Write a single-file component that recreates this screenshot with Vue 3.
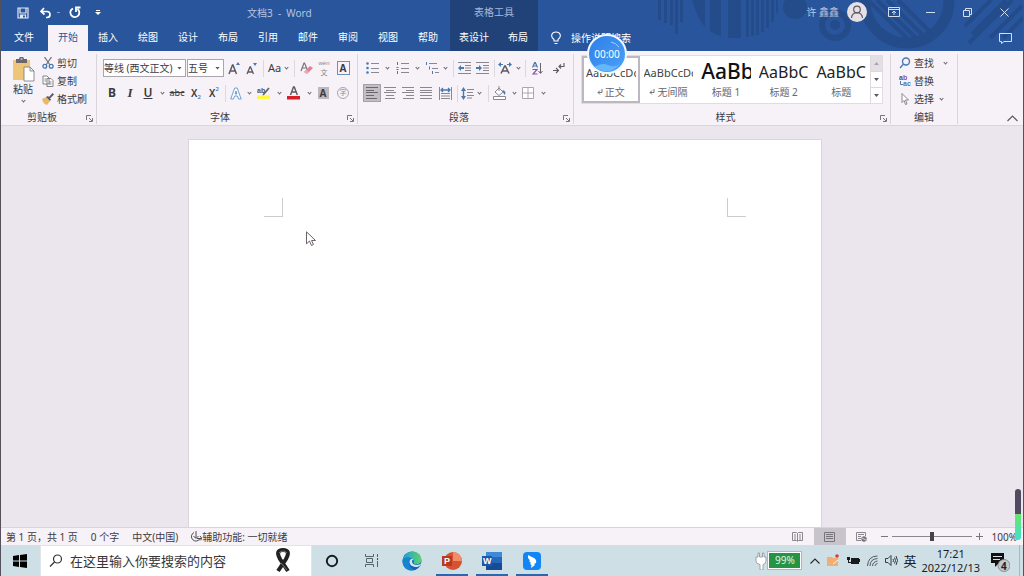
<script setup>
import { ref } from 'vue'

const tabs = ['文件', '开始', '插入', '绘图', '设计', '布局', '引用', '邮件', '审阅', '视图', '帮助']
const activeTab = ref('开始')
const styles = [
  { sample: 'AaBbCcDc', name: '正文', kind: 'body', mark: true },
  { sample: 'AaBbCcDc', name: '无间隔', kind: 'body', mark: true },
  { sample: 'AaBb', name: '标题 1', kind: 'h1' },
  { sample: 'AaBbC', name: '标题 2', kind: 'h2' },
  { sample: 'AaBbC', name: '标题', kind: 'h2' }
]
const activeStyle = ref('正文')
const query = ref('')
const zoom = ref(100)
</script>

<template>
  <div class="desktop">
    <header class="head">
      <svg class="deco" width="384" height="51" viewBox="640 0 384 51" aria-hidden="true">
        <g fill="#244c8a">
          <path d="M658 0h3v20h-3zM664 0h3v23h-3zM670 0h3v25h-3zM675 0h3v34h-3zM680 0h3v22h-3zM692 0h13v27q-8-9-13-27zM710 0h11v36q-6-1-11-5zM728 0h13v38h-13zM746 0h3v37h-3zM751 0h3v36h-3zM756 0h3v35h-3zM761 0h3v32h-3zM766 0h3v28h-3zM771 0h3v22h-3zM776 0h2v13h-2z" />
          <circle cx="795" cy="7" r="12" />
          <circle cx="835" cy="25" r="5" />
        </g>
        <g fill="none" stroke="#244c8a">
          <circle cx="835" cy="25" r="13" stroke-width="6" />
          <circle cx="907" cy="1" r="42" stroke-width="11" />
          <path stroke-width="4" d="M868 0l46 45M877 0l42 41M887 0l40 39M898 0l34 34" />
          <path stroke-width="4" d="M965 26l26-26M972 34l34-34M969 43l43-43M990 38l32-32M1003 38l20-20" />
        </g>
      </svg>

      <div class="head-main">
        <div class="quick">
          <button aria-label="保存"><svg width="12" height="12" viewBox="0 0 12 12"><path fill="none" stroke="#e4eaf5" stroke-width="1.200" d="M1 1h10v10H1zM3 1v5h6V1M3.500 11V8h5v3" /><path fill="#e4eaf5" d="M4 8h2v3H4z" /></svg></button>
          <button aria-label="撤消"><svg width="14" height="12" viewBox="0 0 14 12"><path fill="none" stroke="#fff" stroke-width="1.700" d="M5 1L2 4.500L5.500 7.500M2 4.500h6c4 0 4 6 0 6H7" /></svg></button>
          <i class="dash"></i>
          <button aria-label="重复"><svg width="14" height="13" viewBox="0 0 14 13"><path fill="none" stroke="#fff" stroke-width="1.800" d="M5 2.500A4.500 4.500 0 1 0 9.500 3M8 6V1.500h4.500" /></svg></button>
          <button class="more" aria-label="自定义"><svg width="6" height="6" viewBox="0 0 6 6"><path fill="#fff" d="M1 0h4v1H1zM0 2h6L3 5z" /></svg></button>
          <span class="doc-title">文档3&nbsp; -&nbsp; Word</span>
        </div>
        <nav class="tabs">
          <button v-for="t in tabs" :key="t" :class="{ active: t === activeTab }" @click="activeTab = t">{{ t }}</button>
        </nav>
      </div>

      <div class="context">
        <span class="context-name">表格工具</span>
        <nav class="tabs"><button class="wide">表设计</button><button>布局</button></nav>
      </div>

      <div class="head-side">
        <div class="account">
          <span class="user">许 鑫鑫</span>
          <svg class="avatar" width="20" height="20" viewBox="0 0 20 20"><circle cx="10" cy="10" r="10" fill="#e5e1e6" /><g fill="none" stroke="#5b575f" stroke-width="1.200"><circle cx="10" cy="7.500" r="3.300" /><path d="M4.500 16c.5-7 10.500-7 11 0" /></g></svg>
          <button aria-label="功能区显示选项"><svg width="12" height="10" viewBox="0 0 12 10"><path fill="none" stroke="#d5deee" d="M.5.500h11v9H.5zM.5 2.500h11M6 8V4M4 6l2-2 2 2" /></svg></button>
          <button aria-label="最小化"><svg width="9" height="9" viewBox="0 0 9 9"><path stroke="#d5deee" d="M0 4.500h9" /></svg></button>
          <button aria-label="还原"><svg width="9" height="9" viewBox="0 0 9 9"><path fill="none" stroke="#d5deee" d="M.5 2.500h6v6h-6zM2.500 2.500v-2h6v6h-2" /></svg></button>
          <button aria-label="关闭"><svg width="9" height="9" viewBox="0 0 9 9"><path stroke="#d5deee" d="M.5.500l8 8M8.500.500l-8 8" /></svg></button>
        </div>
        <div class="tell">
          <svg width="10" height="14" viewBox="0 0 10 14"><path fill="none" stroke="#fff" stroke-width="1.100" d="M3 10V8.500C-1 5.500.5 1 5 1s6 4.500 2 7.500V10zM3.500 12.500h3" /></svg>
          <a href="#">操作说明搜索</a>
          <button class="comment" aria-label="批注"><svg width="13" height="11" viewBox="0 0 13 11"><path fill="none" stroke="#d5deee" d="M.5.500h12v8H5L2.500 10.500V8.500h-2z" /></svg></button>
        </div>
      </div>
      <div class="timer">
        <svg width="36" height="36" viewBox="0 0 36 36" aria-hidden="true"><path fill="none" stroke="#9ad4ff" d="M22 6q5 1 8 5" /><path fill="#66b6fb" d="M5 31q8-5 14-2t12-1Q20 41 5 31z" /></svg>
        <span>00:00</span>
      </div>
    </header>

    <section class="ribbon">
      <div class="group clipboard">
        <div class="clip-body">
          <button class="paste">
            <svg width="23" height="25" viewBox="0 0 23 25"><path fill="#edc67a" d="M1 3h17v20H1z" /><path fill="#69666e" d="M4 2h3c0-3 5-3 5 0h3v4H4z" /><path fill="#f6f2f7" d="M8.500 1.500h2v1h-2z" /><path fill="#fff" stroke="#77737c" stroke-width=".8" d="M12 10h6l4 4v10H12zM18 10v4h4" /></svg>
            <span>粘贴</span><i class="chev"></i>
          </button>
          <div class="stack">
            <button><svg width="12" height="12" viewBox="0 0 12 12"><g fill="none" stroke="#77747c" stroke-width="1.300"><path d="M2.500 0L8 8M9.500 0L4 8" /><g stroke="#4879b3"><circle cx="2.800" cy="9.300" r="1.900" /><circle cx="9.200" cy="9.300" r="1.900" /></g></g></svg>剪切</button>
            <button><svg width="12" height="12" viewBox="0 0 12 12"><path fill="#fff" stroke="#77747c" stroke-width=".9" d="M1 1h4l2 2v6H1zM5 3.500h4l2 2v6H5zM2.500 4h2M2.500 6h2M7 7h2.500M7 9h2.500" /></svg>复制</button>
            <button><svg width="12" height="12" viewBox="0 0 12 12"><path fill="#e6b96c" d="M0 6l4-2 4 4-3 4q-4-1-5-6z" /><path fill="#5d5962" d="M4 4l2-1 1 1 3.500-4L12 1.500 8 5.500l1 1L8 8z" /></svg>格式刷</button>
          </div>
        </div>
        <footer><span>剪贴板</span><button class="launch" aria-label="剪贴板设置"><svg width="7" height="7" viewBox="0 0 7 7"><path fill="none" stroke="#77747c" d="M.5 5V.5H5M3 3l3 3M6.500 3v3.500H3" /></svg></button></footer>
      </div>

      <div class="group font">
        <div class="rows">
          <div class="font-one">
            <label class="combo"><select aria-label="字体"><option>等线 (西文正文)</option></select><i class="tri"></i></label>
            <label class="combo"><select aria-label="字号"><option>五号</option></select><i class="tri"></i></label>
            <button aria-label="增大字号"><svg width="13" height="13" viewBox="0 0 13 13"><path fill="none" stroke="#5d5962" stroke-width="1.500" d="M1 12L4.500 3h.5L8.500 12M2.500 9h5" /><path fill="#4879b3" d="M8 3l2-3 2 3z" /></svg></button>
            <button aria-label="减小字号"><svg width="12" height="13" viewBox="0 0 12 13"><path fill="none" stroke="#5d5962" stroke-width="1.300" d="M1 12L4 5h.5L7.500 12M2 10h4.500" /><path fill="#4879b3" d="M7 1h4L9 4z" /></svg></button>
            <i class="bar"></i>
            <button class="aa">Aa<i class="chev"></i></button>
            <i class="bar"></i>
            <button aria-label="清除格式"><svg width="13" height="13" viewBox="0 0 13 13"><path fill="none" stroke="#77747c" stroke-width="1.200" d="M1 9L4 1h.5L7.500 8M2 6h4" /><path fill="#df8197" d="M4 10l6-6 3 2-6 6z" /><path fill="#efabba" d="M4 10l2-2 3 2-2 2z" /></svg></button>
            <button class="pinyin"><span>wén</span><span>文</span></button>
            <button class="boxed">A</button>
          </div>
          <div class="font-two">
            <button class="b">B</button><button class="i">I</button><button class="u">U</button><button aria-label="下划线选项"><i class="chev"></i></button>
            <button class="strike">abc</button><button class="sub">X<sub>2</sub></button><button class="sub">X<sup>2</sup></button>
            <i class="bar"></i>
            <button aria-label="文本效果"><svg width="12" height="13" viewBox="0 0 12 13"><path fill="#fff" stroke="#6f9fd3" stroke-width="1" d="M.7 12L4.700 1h2.500l4 11H8.500L7.500 9h-3l-1 3zM5 7h2L6 4z" /></svg></button><button aria-label="文本效果选项"><i class="chev"></i></button>
            <button aria-label="突出显示"><svg width="14" height="14" viewBox="0 0 14 14"><path fill="#fff843" d="M0 9.500h13V13H0z" /><text x="0" y="7" class="tiny">ab</text><path stroke="#68645f" stroke-width="1.800" d="M6 9l6-7" /></svg></button><button aria-label="突出显示选项"><i class="chev"></i></button>
            <button aria-label="字体颜色"><svg width="14" height="14" viewBox="0 0 14 14"><path fill="none" stroke="#5d5962" stroke-width="1.400" d="M3.500 9l3-8h.8l3 8M4.500 6h5" /><path fill="#d61f26" d="M0 10h13v3.500H0z" /></svg></button><button aria-label="字体颜色选项"><i class="chev"></i></button>
            <button class="shade">A</button>
            <button class="circled">字</button>
          </div>
        </div>
        <footer><span>字体</span><button class="launch" aria-label="字体设置"><svg width="7" height="7" viewBox="0 0 7 7"><path fill="none" stroke="#77747c" d="M.5 5V.5H5M3 3l3 3M6.500 3v3.500H3" /></svg></button></footer>
      </div>

      <div class="group para">
        <div class="rows">
          <div class="para-one">
            <button aria-label="项目符号"><svg width="13" height="12" viewBox="0 0 13 12"><g fill="#4879b3"><circle cx="1.500" cy="1.500" r="1.300" /><circle cx="1.500" cy="6" r="1.300" /><circle cx="1.500" cy="10.500" r="1.300" /></g><path stroke="#8b8790" d="M5 1.500h8M5 6.500h8M5 10.500h8" /></svg></button><button aria-label="项目符号选项"><i class="chev"></i></button>
            <button aria-label="编号"><svg width="13" height="12" viewBox="0 0 13 12"><path stroke="#4879b3" d="M1.500 0v3M.5 5.500h2M.5 7.500h2M1.500 9v3" /><path stroke="#8b8790" d="M5 1.500h8M5 6.500h8M5 10.500h8" /></svg></button><button aria-label="编号选项"><i class="chev"></i></button>
            <button aria-label="多级列表"><svg width="13" height="12" viewBox="0 0 13 12"><path stroke="#4879b3" d="M.5 0v3M3.500 4.500v3M6.500 9v3" /><path stroke="#8b8790" d="M3 1.500h8M6 6.500h6M9 10.500h4" /></svg></button><button aria-label="多级列表选项"><i class="chev"></i></button>
            <i class="bar"></i>
            <button aria-label="减少缩进"><svg width="13" height="12" viewBox="0 0 13 12"><path stroke="#8b8790" d="M0 .5h13M7 3.500h6M7 6h6M7 8.500h6M0 11.500h13" /><path fill="#4879b3" d="M0 6l3-3v2h3v2H3v2z" /></svg></button>
            <button aria-label="增加缩进"><svg width="13" height="12" viewBox="0 0 13 12"><path stroke="#8b8790" d="M0 .5h13M7 3.500h6M7 6h6M7 8.500h6M0 11.500h13" /><path fill="#4879b3" d="M6 6L3 3v2H0v2h3v2z" /></svg></button>
            <i class="bar"></i>
            <button aria-label="中文版式"><svg width="14" height="12" viewBox="0 0 14 12"><path fill="none" stroke="#5d5962" stroke-width="1.500" d="M3 11.500L6.700 4h.6L11 11.500M4.500 9h5" /><path fill="#4879b3" d="M0 2.500L3 0v2h2v1H3v2zM14 2.500L11 0v2H9v1h2v2z" /></svg></button><button aria-label="中文版式选项"><i class="chev"></i></button>
            <i class="bar"></i>
            <button aria-label="排序"><svg width="11" height="13" viewBox="0 0 11 13"><path fill="none" stroke="#4879b3" stroke-width="1.200" d="M.5 5.500L2.700.5h.6l2.200 5M1.500 4h3" /><path fill="none" stroke="#8d52a5" stroke-width="1.200" d="M.5 7.500H5l-4 4.500h4.500" /><path fill="none" stroke="#69666e" d="M8.500 1v10M6.500 9l2 2.500 2-2.500" /></svg></button>
            <i></i>
            <button aria-label="显示编辑标记"><svg width="12" height="12" viewBox="0 0 12 12"><path fill="none" stroke="#5d5962" stroke-width="1.100" d="M11 1v3.500H6M8 2.500l-2 2 2 2M0 8.500h5M3 6l2.500 2.500L3 11" /></svg></button>
          </div>
          <div class="para-two">
            <button class="on" aria-label="左对齐"><svg width="12" height="12" viewBox="0 0 12 12"><path stroke="#69666e" d="M0 .5h12M0 3.500h8M0 5.500h12M0 8.500h8M0 11.500h11" /></svg></button>
            <button aria-label="居中"><svg width="12" height="12" viewBox="0 0 12 12"><path stroke="#8b8790" d="M0 .5h12M2 3.500h8M0 5.500h12M2 8.500h8M1 11.500h10" /></svg></button>
            <button aria-label="右对齐"><svg width="12" height="12" viewBox="0 0 12 12"><path stroke="#8b8790" d="M0 .5h12M4 3.500h8M0 5.500h12M4 8.500h8M1 11.500h11" /></svg></button>
            <button aria-label="两端对齐"><svg width="12" height="12" viewBox="0 0 12 12"><path stroke="#8b8790" d="M0 .5h12M0 3.500h12M0 5.500h12M0 8.500h12M0 11.500h12" /></svg></button>
            <button aria-label="分散对齐"><svg width="13" height="13" viewBox="0 0 13 13"><path stroke="#8b8790" d="M.5 0v13M12.500 0v13M2 6.500h9M2 9h9M2 11.500h9" /><path fill="none" stroke="#4879b3" stroke-width="1.300" d="M2 3h9M4 1L2 3l2 2M9 1l2 2-2 2" /></svg></button>
            <i class="bar"></i>
            <button aria-label="行距"><svg width="13" height="13" viewBox="0 0 13 13"><path fill="#4879b3" d="M0 4l2.500-4L5 4H3.200v5H5l-2.500 4L0 9h1.800V4z" /><path stroke="#8b8790" d="M6 2.500h7M6 5.500h6M6 8.500h7M6 11h5" /></svg></button><button aria-label="行距选项"><i class="chev"></i></button>
            <i class="bar"></i>
            <button aria-label="底纹"><svg width="14" height="14" viewBox="0 0 14 14"><path fill="#fff" stroke="#8b8790" d="M.5 10.500h12v3H.5zM2 6l4-4 4 4-4 3.500zM6 5V0" /><path fill="#4879b3" d="M10 4q4 2 1.500 5L9.500 5z" /></svg></button><button aria-label="底纹选项"><i class="chev"></i></button>
            <button aria-label="边框"><svg width="12" height="12" viewBox="0 0 12 12"><path fill="#fff" stroke="#aaa6af" d="M.5.500h11v11H.5zM6 0v12M0 6h12" /></svg></button><button aria-label="边框选项"><i class="chev"></i></button>
          </div>
        </div>
        <footer><span>段落</span><button class="launch" aria-label="段落设置"><svg width="7" height="7" viewBox="0 0 7 7"><path fill="none" stroke="#77747c" d="M.5 5V.5H5M3 3l3 3M6.500 3v3.500H3" /></svg></button></footer>
      </div>

      <div class="group gallery-group">
        <div class="gallery">
          <button v-for="s in styles" :key="s.name" class="style" :class="{ chosen: s.name === activeStyle }" @click="activeStyle = s.name">
            <span class="sample" :class="s.kind">{{ s.sample }}</span>
            <span class="style-name"><svg v-if="s.mark" width="6" height="6" viewBox="0 0 6 6"><path fill="none" stroke="#77747c" d="M5 0v3.500H1M3 1.500l-2 2 2 2" /></svg>{{ s.name }}</span>
          </button>
          <div class="scroll"><button class="off" aria-label="上一行"><i class="tri up"></i></button><button aria-label="下一行"><i class="tri"></i></button><button aria-label="其他"><i class="tri"></i></button></div>
        </div>
        <footer><span>样式</span><button class="launch" aria-label="样式设置"><svg width="7" height="7" viewBox="0 0 7 7"><path fill="none" stroke="#77747c" d="M.5 5V.5H5M3 3l3 3M6.500 3v3.500H3" /></svg></button></footer>
      </div>

      <div class="group editing">
        <div class="stack">
          <button><svg width="12" height="12" viewBox="0 0 12 12"><g fill="none" stroke="#4879b3" stroke-width="1.400"><circle cx="7" cy="4.500" r="3.500" /><path d="M4.500 7L1 11" /></g></svg>查找<i class="chev far"></i></button>
          <button><svg width="12" height="12" viewBox="0 0 12 12"><text x="0" y="5" class="tiny">a</text><text x="4" y="5" class="tiny purple">b</text><text x="4" y="11" class="tiny blue">ac</text><path fill="none" stroke="#4879b3" d="M1.500 6v3.500H4" /></svg>替换</button>
          <button><svg width="12" height="12" viewBox="0 0 12 12"><path fill="#fff" stroke="#8b8790" d="M3 .5v9l2-2 1.500 4 1.500-.5L6.500 7H9.500z" /></svg>选择<i class="chev"></i></button>
        </div>
        <footer><span>编辑</span></footer>
      </div>
      <button class="collapse" aria-label="折叠功能区"><svg width="11" height="7" viewBox="0 0 11 7"><path fill="none" stroke="#5d5962" stroke-width="1.200" d="M.5 6l5-5 5 5" /></svg></button>
    </section>

    <main class="workspace">
      <article class="page">
        <i class="mark left"></i><i class="mark right"></i>
      </article>
      <svg class="cursor" width="11" height="15" viewBox="0 0 11 15"><path fill="#fff" stroke="#6b626c" d="M.5.800v12l3-2.800 2 4.500 2-1-2-4h4z" /></svg>
    </main>

    <div class="status">
      <span>第 1 页，共 1 页</span><span class="words">0 个字</span><span class="lang">中文(中国)</span>
      <span class="access"><svg width="12" height="12" viewBox="0 0 12 12"><path fill="none" stroke="#4e4b52" d="M4 1.500a4.500 4.500 0 1 0 6 6M6 0v7M3.500 5L6 7.500 8.500 5M7 7.500h5M10 5l2 2.500-2 2" /></svg>辅助功能: 一切就绪</span>
      <div class="views">
        <button aria-label="阅读视图"><svg width="11" height="10" viewBox="0 0 11 10"><path fill="none" stroke="#8b8790" d="M.5.500h4l1 1 1-1h4v8h-4l-1 1-1-1h-4zM5.500 1v8M2 3h2M2 5h2M2 7h2M7 3h2M7 5h2M7 7h2" /></svg></button>
        <button class="on" aria-label="页面视图"><svg width="11" height="10" viewBox="0 0 11 10"><path fill="none" stroke="#77747c" d="M.5.500h10v9H.5zM2 2.500h7M2 4.500h7M2 6.500h7" /></svg></button>
        <button aria-label="Web 版式视图"><svg width="11" height="10" viewBox="0 0 11 10"><path fill="none" stroke="#8b8790" d="M5 8.500H.5v-8h9V4M2 2.500h6M2 4.500h3M2 6.500h3" /><circle cx="8" cy="7" r="2.700" fill="#77747c" /><path stroke="#fff" stroke-width=".7" d="M6 6l4 2" /></svg></button>
      </div>
      <div class="zoom"><button aria-label="缩小"><svg width="7" height="7" viewBox="0 0 7 7"><path stroke="#77747c" d="M0 3.500h7" /></svg></button><input v-model="zoom" type="range" min="10" max="190" aria-label="缩放"><button aria-label="放大"><svg width="7" height="7" viewBox="0 0 7 7"><path stroke="#77747c" d="M0 3.500h7M3.500 0v7" /></svg></button><span>{{ zoom }}%</span></div>
    </div>

    <footer class="taskbar">
      <button class="start" aria-label="开始"><svg width="14" height="14" viewBox="0 0 14 14"><path d="M0 2l6-1v5.500H0zM7 1l7-1v6.500H7zM0 7.500h6V13l-6-1zM7 7.500h7V14l-7-1z" /></svg></button>
      <label class="search">
        <svg width="14" height="14" viewBox="0 0 14 14"><g fill="none" stroke="#333" stroke-width="1.200"><circle cx="8.500" cy="5" r="4" /><path d="M5.500 8L1 12.500" /></g></svg>
        <input v-model="query" type="text" placeholder="在这里输入你要搜索的内容" aria-label="搜索">
        <svg width="16" height="26" viewBox="0 0 16 26"><path fill="none" stroke="#222" stroke-width="4" d="M3 23L11 11Q16 2 8 2T5 11l8 12" /><path fill="none" stroke="#77747c" stroke-width="1" d="M4 5q4-4 8 0M6 15l6 7" /></svg>
      </label>
      <nav class="apps">
        <button aria-label="Cortana"><svg width="14" height="14" viewBox="0 0 14 14"><circle cx="7" cy="7" r="5.200" fill="none" stroke="#151a1d" stroke-width="1.900" /></svg></button>
        <button aria-label="任务视图"><svg width="14" height="13" viewBox="0 0 14 13"><path fill="none" stroke="#56636a" d="M.5 0v2.500h8V0M1.500 4.500h6v4h-6zM.5 13v-2.500h8V13M12.500 0v3M12.500 7v6" /><path fill="#3d474c" d="M12 4h1v2h-1z" /></svg></button>
        <button aria-label="Edge"><svg width="20" height="20" viewBox="0 0 20 20"><defs><linearGradient id="edge-top"><stop stop-color="#1e9ddd" /><stop offset="1" stop-color="#5fd365" /></linearGradient></defs><circle cx="10" cy="10" r="9.500" fill="#0f66b8" /><path fill="url(#edge-top)" d="M.6 9C2-1.500 17-3 19.500 8c.5 4-3 6-7 5-2-1 0-2-1-4C9 6 3 6 .6 9z" /><path fill="#1585cf" d="M.5 9C3 5 9 6 10 8c-5 2-3 9 2 11C4 21 0 15 .5 9z" /><path fill="#d3e3e9" d="M11.500 8c-3 2-1 6 3 6 2 0 4-1 5-2-.5 2-2 3-4 4-5 0-8-2-8-5 0-2 2-4 4-3z" /></svg></button>
        <button class="running" aria-label="PowerPoint"><svg width="20" height="18" viewBox="0 0 20 18"><circle cx="11" cy="9" r="9" fill="#d65332" /><path fill="#f08e69" d="M11 0a9 9 0 0 1 9 9h-9z" /><path fill="#b73b1e" d="M0 4h10v10H0z" /><text x="2" y="12" class="logo">P</text></svg></button>
        <button class="running" aria-label="Word"><svg width="20" height="18" viewBox="0 0 20 18"><path fill="#3d8bd8" d="M4 0h16v6H4z" /><path fill="#2467bb" d="M4 5h16v6H4z" /><path fill="#174b96" d="M4 11h16v7H4z" /><path fill="#1c59a9" d="M0 4h10v10H0z" /><text x="1" y="12" class="logo">W</text></svg></button>
        <button class="running" aria-label="通讯"><svg width="18" height="18" viewBox="0 0 18 18"><rect width="18" height="18" rx="4" fill="#1186f4" /><path fill="#fff" d="M5 3l6 3q3 2 2 5l-2 1 1 1-4 3 .5-3L7 12l1-1-2-2 1-.5L5 6z" /></svg></button>
      </nav>
      <div class="tray">
        <svg width="12" height="18" viewBox="0 0 12 18"><path fill="#fff" stroke="#8b9296" stroke-width=".8" d="M3 1h1.500v4h3V1H9v4h2v4q0 3-3 3.500V18H5v-5.500Q1 12 1 9V5h2z" /></svg>
        <span class="battery">99%</span>
        <svg width="10" height="6" viewBox="0 0 10 6"><path fill="none" stroke="#22292d" stroke-width="1.100" d="M.5 5.500L5 1l4.500 4.500" /></svg>
        <svg width="13" height="13" viewBox="0 0 13 13"><path fill="#f2ae72" d="M0 3h5l1 1h5v8H0z" /><path fill="none" stroke="#fff1df" d="M6 10l5-4" /><circle cx="10" cy="2" r="1.800" fill="#dc3b3d" /></svg>
        <svg width="13" height="9" viewBox="0 0 13 9"><path fill="#171b1d" d="M4 2h8v1h1v3h-1v2H4zM0 1h3v3H2v2h2v1H1V4H0z" /></svg>
        <svg width="11" height="12" viewBox="0 0 11 12"><g fill="none" stroke="#4f585d"><path d="M.5 11Q1 1 10.500 1M3 11q0-7 7.500-7.500M5.500 11q0-4 5-5M8 11q0-2 2.500-2.500" /></g></svg>
        <svg width="13" height="11" viewBox="0 0 13 11"><path fill="none" stroke="#343b3f" d="M.5 3.500H3l3-3v10l-3-3H.5zM8 4q1 1.500 0 3M9.500 2.500q2 3 0 6M11 1q3 4.500 0 9" /></svg>
        <span class="ime">英</span>
        <time><span>17:21</span><span>2022/12/13</span></time>
        <button class="notice" aria-label="通知"><svg width="19" height="21" viewBox="0 0 19 21"><path fill="#111" d="M0 1h13v10H8l-4 4v-4H0z" /><path stroke="#d4e2e8" d="M2 4.500h9M2 7.500h7" /><circle cx="13" cy="13.500" r="6" fill="#c5c9cc" stroke="#777d80" stroke-width=".8" /><text x="10" y="18" class="count">4</text></svg></button>
        <i class="show-desktop"></i>
      </div>
    </footer>
    <i class="meter"></i>
  </div>
</template>

<style>
body { background: #cfdfe6; }
</style>

<style scoped>
* { box-sizing: border-box; }
.desktop { position: relative; display: flex; flex-direction: column; min-height: 100vh; overflow: hidden; background: #f6f2f7; color: #3d3a40; font: 10px/14px "Noto Sans", "Noto Sans CJK SC", sans-serif; }
.desktop::after { content: ""; position: absolute; inset: 0; border: solid #54515c; border-width: 0 1px; pointer-events: none; }
button, input, select { margin: 0; padding: 0; border: 0; background: none; color: inherit; font: inherit; }
button { display: flex; align-items: center; justify-content: center; white-space: nowrap; }
svg { display: block; flex: none; }
i { font-style: normal; }
.chev { flex: none; width: 3px; height: 3px; margin-bottom: 1px; border: solid #69666e; border-width: 0 1px 1px 0; transform: rotate(45deg); }
.tri { flex: none; width: 5px; height: 3px; background: #5d5962; clip-path: polygon(0 0, 100% 0, 50% 100%); }
.tri.up { transform: rotate(180deg); background: #aaa6af; }
.bar { width: 1px; height: 17px; background: #dcd8de; }
.tiny { font: bold 7px "Liberation Sans", sans-serif; fill: #55515a; }
.purple { fill: #8d52a5; }
.blue { fill: #4879b3; }

.head { position: relative; display: flex; height: 51px; background: #28559b; color: #fff; }
.deco { position: absolute; top: 0; right: 0; }
.head-main { width: 450px; }
.quick { display: flex; align-items: center; height: 25px; padding-left: 16px; }
.quick button { width: 13px; height: 20px; margin-right: 10px; }
.quick .dash { width: 3px; height: 1px; margin: 0 8px 0 -5px; background: #8aa3cd; }
.doc-title { margin-left: 133px; color: #b5c5e0; }
.tabs { display: flex; height: 26px; }
.tabs button { width: 40px; padding-bottom: 2px; }
.head-main .tabs button:first-child { width: 48px; }
.tabs .active { background: #f6f2f7; color: #28559b; }
.context { width: 88px; background: #204279; }
.context-name { display: block; height: 25px; line-height: 25px; text-align: center; color: #a6b9dc; }
.context .tabs .wide { width: 48px; }
.head-side { position: relative; flex: 1; }
.account { display: flex; align-items: center; justify-content: flex-end; height: 24px; padding-right: 1px; }
.account button { width: 37px; height: 24px; }
.user { margin-right: 8px; color: #b5c5e0; }
.avatar { margin-right: 8px; }
.tell { display: flex; align-items: center; height: 28px; padding: 0 12px 0 13px; gap: 10px; }
.tell a { color: #fff; text-decoration: none; }
.comment { margin-left: auto; }
.timer { position: absolute; left: 587px; top: 34px; z-index: 2; width: 40px; height: 40px; border: 2px solid #f3f8fe; border-radius: 50%; background: linear-gradient(135deg, #2f7fe8, #4aa1f8); overflow: hidden; }
.timer svg { position: absolute; inset: 0; }
.timer span { position: relative; display: block; text-align: center; line-height: 36px; }

.ribbon { display: flex; height: 75px; padding: 3px 0 0; border-bottom: 1px solid #dad6dc; }
.group { display: flex; flex-direction: column; height: 70px; border-right: 1px solid #d8d4da; }
.group footer { position: relative; display: flex; align-items: center; justify-content: center; height: 14px; margin-top: auto; }
.launch { position: absolute; right: 3px; top: 5px; }
.clipboard { width: 97px; }
.clipboard footer { padding-right: 12px; }
.font { width: 261px; padding-left: 6px; }
.font footer { padding-right: 20px; }
.para { width: 216px; padding-left: 5px; }
.para footer { padding-right: 18px; }
.gallery-group { flex: 1; max-width: 317px; padding: 0 0 0 7px; }
.gallery-group footer { padding-right: 20px; }
.editing { width: 67px; }
.clip-body { display: flex; }
.paste { flex-direction: column; justify-content: flex-start; width: 42px; padding-left: 4px; height: 50px; margin-top: 3px; }
.paste span { margin-bottom: 3px; }
.stack { display: flex; flex-direction: column; }
.stack button { justify-content: flex-start; height: 18px; gap: 3px; }
.stack .chev { margin-left: 3px; }
.stack .chev.far { margin-left: 7px; }
.editing .stack { padding-left: 8px; }
.collapse { align-self: flex-end; margin: 0 6px 0 auto; height: 14px; }
.rows { display: flex; flex-direction: column; gap: 7px; padding-top: 5px; }
.rows > div { display: grid; height: 18px; align-items: center; justify-items: center; }
.rows button { width: 100%; height: 18px; }
.font-one { grid-template-columns: 84px 37px 20px 16px 6px 24px 8px 16px 20px 18px; }
.font-two { grid-template-columns: 18px 18px 18px 10px 20px 18px 18px 4px 18px 8px 22px 8px 22px 8px 20px 20px; }
.para-one { grid-template-columns: 18px 12px 18px 12px 18px 8px 8px 14px 22px 2px 20px 6px 8px 16px 6px 16px; }
.para-two { grid-template-columns: 18px 18px 18px 18px 20px 4px 16px 8px 10px 14px 14px 14px 16px; }
.combo { display: flex; align-items: center; width: 100%; height: 18px; padding: 0 3px 0 0; border: 1px solid #aaa6af; background: #fff; }
.combo:first-child { width: 83px; justify-self: start; }
.combo select { flex: 1; min-width: 0; appearance: none; outline: 0; }
.aa { font-size: 11px; gap: 4px; }
.rows .pinyin { flex-direction: column; color: #8b8790; font: 6px/8px "Liberation Sans", sans-serif; }
.pinyin span + span { font: 7px/10px "Noto Sans CJK SC", sans-serif; }
.rows .boxed { width: 13px; height: 14px; border: 1px solid #6d8fbe; font-weight: bold; }
.b { font-weight: bold; font-size: 12px; }
.i { font: italic bold 13px "Liberation Serif", serif; }
.u { font-size: 12px; font-weight: 600; text-decoration: underline; }
.strike { font-size: 9px; text-decoration: line-through; }
.sub { font-weight: 600; }
.sub sub, .sub sup { color: #4879b3; font-size: 6px; line-height: 6px; }
.sub sub { margin-top: 8px; }
.sub sup { margin-bottom: 8px; }
.rows .shade { width: 11px; height: 12px; background: #bcb8be; font-weight: bold; }
.rows .circled { width: 12px; height: 12px; border: 1px solid #aaa6af; border-radius: 50%; color: #8b8790; font-size: 7px; }
.para-two .on { background: #c2bec5; border: 1px solid #a5a1a8; }
.gallery { display: flex; height: 49px; margin: 1px 7px 0 0; border: 1px solid #e0dce2; background: #fff; }
.style { flex: 1; min-width: 0; flex-direction: column; justify-content: flex-start; padding: 2px 4px 0; overflow: hidden; }
.style.chosen { padding: 0 2px; border: 2px solid #bdb7c0; }
.sample { align-self: stretch; height: 27px; line-height: 30px; font-size: 11px; overflow: hidden; color: #444; text-align: left; }
.sample.h1 { font-size: 21px; font-weight: 500; line-height: 27px; color: #111; }
.sample.h2 { font-size: 16px; line-height: 28px; color: #222; }
.style-name { display: flex; align-items: center; gap: 2px; color: #69666e; }
.scroll { display: flex; flex-direction: column; width: 12px; border-left: 1px solid #dcd8de; }
.scroll button { flex: 1; }
.scroll button + button { border-top: 1px solid #dcd8de; }
.scroll .off { background: #e3dfe5; }

.workspace { position: relative; flex: 1; display: flex; justify-content: center; padding: 13px 14px 0 0; background: #ebe5ed; }
.page { display: flex; justify-content: space-between; width: 634px; padding: 58px 75px 0; border: 1px solid #d9d5da; border-bottom: 0; background: #fff; }
.mark { width: 19px; height: 19px; border: solid #cfcad0; }
.mark.left { border-width: 0 1px 1px 0; }
.mark.right { border-width: 0 0 1px 1px; }
.cursor { position: absolute; left: 306px; top: 105px; }

.status { display: flex; align-items: center; height: 18px; padding: 0 7px 0 6px; border-top: 1px solid #d8d4da; white-space: nowrap; }
.words { margin-left: 13px; }
.lang { margin-left: 13px; }
.access { display: flex; align-items: center; margin-left: 12px; }
.views { display: flex; margin-left: auto; height: 17px; }
.views button { width: 32px; }
.views .on { background: #c8c4cb; }
.zoom { display: flex; align-items: center; margin-left: 3px; }
.zoom span { margin-left: 9px; }
.zoom input { width: 80px; height: 14px; margin: 0 4px; appearance: none; background: linear-gradient(#8b8790, #8b8790) center / 100% 1px no-repeat; }
.zoom input::-webkit-slider-thumb { appearance: none; width: 4px; height: 9px; background: #45424a; }

.taskbar { display: flex; height: 31px; background: #cfdfe6; color: #182024; }
.start { width: 40px; }
.search { display: flex; align-items: center; width: 272px; padding: 0 20px 0 8px; background: #fff; border: 1px solid #dfe5e8; border-bottom: 0; }
.search input { flex: 1; min-width: 0; margin-left: 7px; outline: 0; font-size: 13px; line-height: 20px; }
.search input::placeholder { color: #37373b; opacity: 1; }
.apps { display: flex; }
.apps button { width: 40px; }
.apps .running { background: linear-gradient(#2868b1, #2868b1) center bottom / 32px 2px no-repeat; }
.logo { font: bold 9px "Liberation Sans", sans-serif; fill: #fff; }
.tray { display: flex; align-items: center; gap: 7px; margin-left: auto; }
.battery { width: 33px; height: 17px; margin: 0 2px 0 -6px; border: 1px solid #fff; outline: 1px solid #adb8bd; background: #259445; color: #e4f3e8; line-height: 15px; text-align: center; }
.ime { margin: 0 -2px; font-size: 13px; }
.tray time { display: flex; flex-direction: column; align-items: center; font-size: 11px; line-height: 14px; }
.notice { margin-left: 4px; padding-top: 3px; }
.count { font: bold 10px "Noto Sans", sans-serif; fill: #222; }
.show-desktop { width: 5px; height: 31px; margin-left: 2px; border-left: 1px solid #a9b8bf; }
.meter { position: absolute; right: 3px; bottom: 36px; width: 6px; height: 51px; border-radius: 3px; background: linear-gradient(#514a60 50%, #67e56d 50%, #3fe1ce); }
</style>
